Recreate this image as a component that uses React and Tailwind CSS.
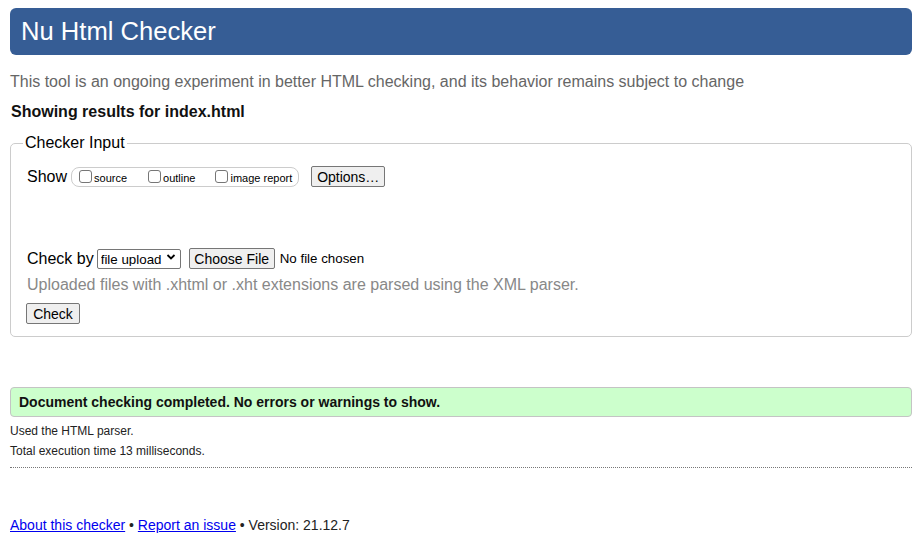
import React from "react";

const FONT = { fontFamily: '"Liberation Sans", Arial, sans-serif' };

function Box({ label }) {
  return (
    <label className="flex items-end">
      <input
        type="checkbox"
        className="appearance-none w-[13px] h-[13px] border border-[#767676] rounded-[3px] bg-white m-0"
      />
      <span className="ml-[2px] text-[11px] leading-[12px] translate-y-[1px] text-black">{label}</span>
    </label>
  );
}

export default function App() {
  return (
    <div className="min-h-[549px] bg-white pl-[10px] pr-[5px] text-black" style={FONT}>
      {/* titel */}
      <h1 className="mt-[8px] h-[47px] rounded-[6px] bg-[#365d95] flex items-center pl-[11px] text-[25.6px] leading-none text-white">
        Nu Html Checker
      </h1>

      <p className="mt-[17px] text-[16px] leading-[20px] text-[#666]">
        This tool is an ongoing experiment in better HTML checking, and its behavior remains subject to change
      </p>
      <p className="mt-[10px] pl-[1px] text-[16px] leading-[20px] font-bold text-[#111]">
        Showing results for index.html
      </p>

      {/* invoer */}
      <fieldset className="mt-[11px] border border-[#ccc] rounded-[5px] px-[16px] pb-[12px]">
        <legend className="ml-[-4px] px-[2px] text-[16px] leading-[20px]">Checker Input</legend>

        <div className="mt-[13px] h-[21px] flex items-center">
          <span className="text-[16px] leading-[20px]">Show</span>
          <div className="ml-[4px] h-[20px] flex items-center border border-[#ccc] rounded-[8px] pl-[7px] pr-[6px]">
            <Box label="source" />
            <div className="w-[21px]" />
            <Box label="outline" />
            <div className="w-[20px]" />
            <Box label="image report" />
          </div>
          <button
            type="button"
            className="ml-[12px] h-[21px] w-[74px] bg-[#efefef] border border-[#767676] rounded-[2px] text-[14px] leading-none"
          >
            Options…
          </button>
        </div>

        <div className="mt-[61px] h-[21px] flex items-center">
          <span className="text-[16px] leading-[20px]">Check by</span>
          <div className="relative ml-[3px]">
            <select className="appearance-none h-[20px] w-[84px] border border-[#767676] rounded-[2px] bg-white pl-[3px] text-[13.33px] leading-none text-black">
              <option>file upload</option>
            </select>
            <svg
              className="absolute right-[5px] top-[6px] pointer-events-none"
              width="10"
              height="8"
              viewBox="0 0 10 8"
            >
              <path d="M1.5 2 L5 5.5 L8.5 2" fill="none" stroke="#000" strokeWidth="1.8" />
            </svg>
          </div>
          <button
            type="button"
            className="ml-[8px] h-[21px] w-[86px] bg-[#efefef] border border-[#767676] rounded-[2px] text-[14px] leading-none"
          >
            Choose File
          </button>
          <span className="ml-[5px] text-[13.33px]">No file chosen</span>
        </div>

        <p className="mt-[6px] text-[16px] leading-[20px] text-[#888]">
          Uploaded files with .xhtml or .xht extensions are parsed using the XML parser.
        </p>

        <button
          type="button"
          className="mt-[8px] ml-[-1px] h-[21px] w-[54px] bg-[#efefef] border border-[#767676] rounded-[2px] text-[14px] leading-none block"
        >
          Check
        </button>
      </fieldset>

      {/* resultaat */}
      <div className="mt-[50px] h-[30px] flex items-center bg-[#ccffcc] border border-[#c4c4c4] rounded-[4px] pl-[8px] text-[14px] font-bold text-[#111]">
        Document checking completed. No errors or warnings to show.
      </div>

      <p className="mt-[4px] text-[12px] leading-[20px] text-[#222]">Used the HTML parser.</p>
      <p className="text-[12px] leading-[20px] text-[#222]">Total execution time 13 milliseconds.</p>

      <hr className="mt-[6px] border-0 border-t border-dotted border-[#777]" />

      <p className="mt-[47px] text-[14px] leading-[20px] text-[#222]">
        <a href="#" className="text-[#0000ee] underline">About this checker</a>
        {" • "}
        <a href="#" className="text-[#0000ee] underline">Report an issue</a>
        {" • Version: 21.12.7"}
      </p>
    </div>
  );
}
